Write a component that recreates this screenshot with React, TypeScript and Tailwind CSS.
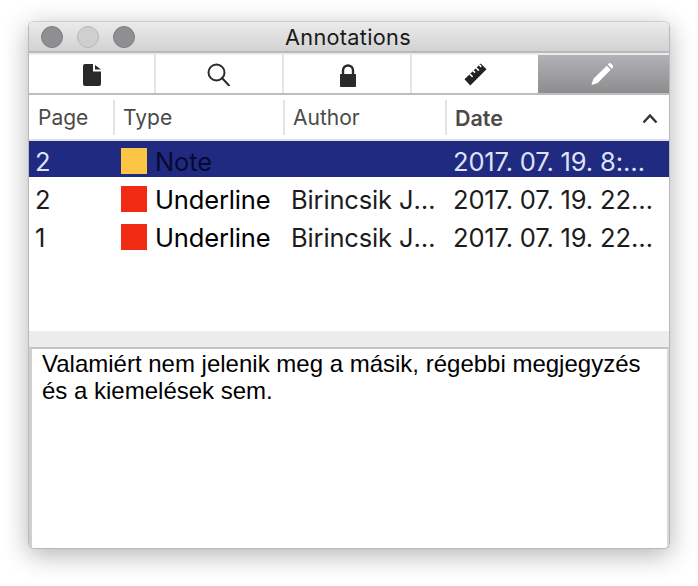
import React from "react";

const ui = "font-['Inter','Noto_Sans',sans-serif]";

function Row({ page, color, type, author, date, selected }: { page: string; color: string; type: string; author: string; date: string; selected?: boolean }) {
  return (
    <div className={`flex h-[36px] mb-[2px] pt-[4px] items-center text-[25.5px] tracking-[-0.15px] leading-[30px] ${selected ? "bg-[#1f2a80] text-[#dfe3f5]" : "bg-white text-[#1c1c1c]"}`}>
      <div className="w-[92px] pl-[6px] pt-[1px] shrink-0">{page}</div>
      <div className="w-[170px] shrink-0 flex items-center gap-[8px]">
        <span className={`w-[26px] h-[26px] shrink-0 ${color}`} />
        <span className={`pt-[1px] ${selected ? "text-[#070a30]" : "text-black"}`}>{type}</span>
      </div>
      <div className="w-[162px] shrink-0 truncate pr-[8px] pt-[1px]">{author}</div>
      <div className="flex-1 truncate pr-[11px] pt-[1px]">{date}</div>
    </div>
  );
}

function Tab({ children, last }: { children: React.ReactNode; last?: boolean }) {
  return (
    <div className={`flex items-center justify-center bg-white ${last ? "w-[125px]" : "w-[127px] mr-[1px] border-r-2 border-[#e4e4e4]"}`}>
      {children}
    </div>
  );
}

function Head({ label, width, pad }: { label: string; width: string; pad: string }) {
  return (
    <div className={`${width} ${pad} shrink-0 h-[35px] flex items-center pt-[2px] border-r-2 border-[#e3e3e3] text-[21px]`}>
      {label}
    </div>
  );
}

export default function App() {
  return (
    <div className="w-[698px] h-[586px] bg-white pt-[21px] pl-[28px]">
      <div className={`w-[642px] h-[528px] rounded-[6px] overflow-hidden flex flex-col bg-white border-x border-b border-[#b8b8b8] shadow-[0_6px_26px_rgba(0,0,0,0.3)] ${ui}`}>
        <div className="h-[32px] shrink-0 relative flex items-center justify-center pt-[2px] pr-[2px] bg-gradient-to-b from-[#ebebeb] to-[#d2d2d2] border-t border-[#cfcfcf] border-b-2 border-b-[#b9b9b9]">
          <div className="absolute left-[12px] top-[4px] flex gap-[14px]">
            <span className="w-[22px] h-[22px] rounded-full bg-[#8f8e91] border border-[#7c7b7e]" />
            <span className="w-[22px] h-[22px] rounded-full bg-[#cfcfcf] border border-[#b9b9b9]" />
            <span className="w-[22px] h-[22px] rounded-full bg-[#8f8e91] border border-[#7c7b7e]" />
          </div>
          <span className="text-[21.7px] leading-none text-[#1a1a1a] tracking-[0.3px] font-['Inter']">Annotations</span>
        </div>
        <div className="h-[2px] shrink-0 bg-[#ececec]" />
        <div className="h-[38px] shrink-0 flex">
          <Tab>
            <svg className="mt-[2px]" width="18" height="22" viewBox="0 0 18 22">
              <path d="M2 0H10V7.5H18V20a2 2 0 0 1-2 2H2a2 2 0 0 1-2-2V2a2 2 0 0 1 2-2Z" fill="#2a2a2a" />
              <path d="M12 1L18 5.5H12Z" fill="#2a2a2a" />
            </svg>
          </Tab>
          <Tab>
            <svg className="mr-[3px]" width="23" height="23" viewBox="0 0 23 23" fill="none" stroke="#2a2a2a" strokeWidth="2">
              <circle cx="9.5" cy="9.5" r="8" />
              <path d="M15 15L22 22.5" strokeLinecap="round" />
            </svg>
          </Tab>
          <Tab>
            <svg className="mt-[2px]" width="18" height="23" viewBox="0 0 18 23">
              <path d="M4 10V6.5a5 5 0 0 1 10 0V10" fill="none" stroke="#2a2a2a" strokeWidth="2.4" />
              <rect x="1" y="10" width="16" height="13" rx="0.8" fill="#2a2a2a" />
            </svg>
          </Tab>
          <Tab last>
            <svg width="23" height="23" viewBox="0 0 24 24">
              <path d="M0.5 17L17.5 0.5L23.5 6.5L6.5 23.5Z" fill="#222" />
              <path d="M6 11.5l3 3M9.5 8l2 2M12.5 5l3 3M16 2l2 2" stroke="#fff" strokeWidth="1.6" />
            </svg>
          </Tab>
          <div className="flex-1 flex items-center justify-center bg-gradient-to-b from-[#b3b1b5] to-[#8d8c8f]">
            <svg className="mr-[2px]" width="23" height="24" viewBox="0 0 24 24" fill="#fff">
              <path d="M0.5 23.5L2.5 17L16.5 3.5L20.5 7.5L7 21.5Z" />
              <path d="M18.2 1.3a2 2 0 0 1 2.8 0l1.6 1.6a2 2 0 0 1 0 2.8l-.9.9L17.6 2Z" />
            </svg>
          </div>
        </div>
        <div className="h-[2px] shrink-0 bg-[#bdbdbd]" />
        <div className="h-[46px] shrink-0 flex items-center text-[#4a4a4a] border-b-2 border-[#e2e2e2]">
          <Head label="Page" width="w-[86px]" pad="pl-[9px]" />
          <Head label="Type" width="w-[170px]" pad="pl-[8px]" />
          <Head label="Author" width="w-[162px]" pad="pl-[8px]" />
          <div className="flex-1 h-[35px] flex items-center justify-between pl-[8px] pt-[2px] pr-[11px] text-[21.5px] font-semibold">
            <span>Date</span>
            <svg width="16" height="11" viewBox="0 0 16 11" fill="none" stroke="#333" strokeWidth="2.4">
              <path d="M1.5 9.5L8 2.5L14.5 9.5" />
            </svg>
          </div>
        </div>
        <div className="h-[190px] shrink-0 bg-white">
          <Row selected page="2" color="bg-[#fcc545]" type="Note" author="" date="2017. 07. 19. 8:35:12" />
          <Row page="2" color="bg-[#f12a14]" type="Underline" author="Birincsik József" date="2017. 07. 19. 22:14:03" />
          <Row page="1" color="bg-[#f12a14]" type="Underline" author="Birincsik József" date="2017. 07. 19. 22:13:41" />
        </div>
        <div className="h-[16px] shrink-0 bg-[#ececec]" />
        <div className="flex-1 bg-white border-t-2 border-t-[#c4c4c4] border-l-[3px] border-l-[#cfcfcf] border-r-[2px] border-r-[#d8d8d8] pl-[10px] pr-[20px] pt-[1px] font-['Liberation_Sans',sans-serif] text-[24px] leading-[27px] text-black">
          Valamiért nem jelenik meg a másik, régebbi megjegyzés és a kiemelések sem.
        </div>
      </div>
    </div>
  );
}
